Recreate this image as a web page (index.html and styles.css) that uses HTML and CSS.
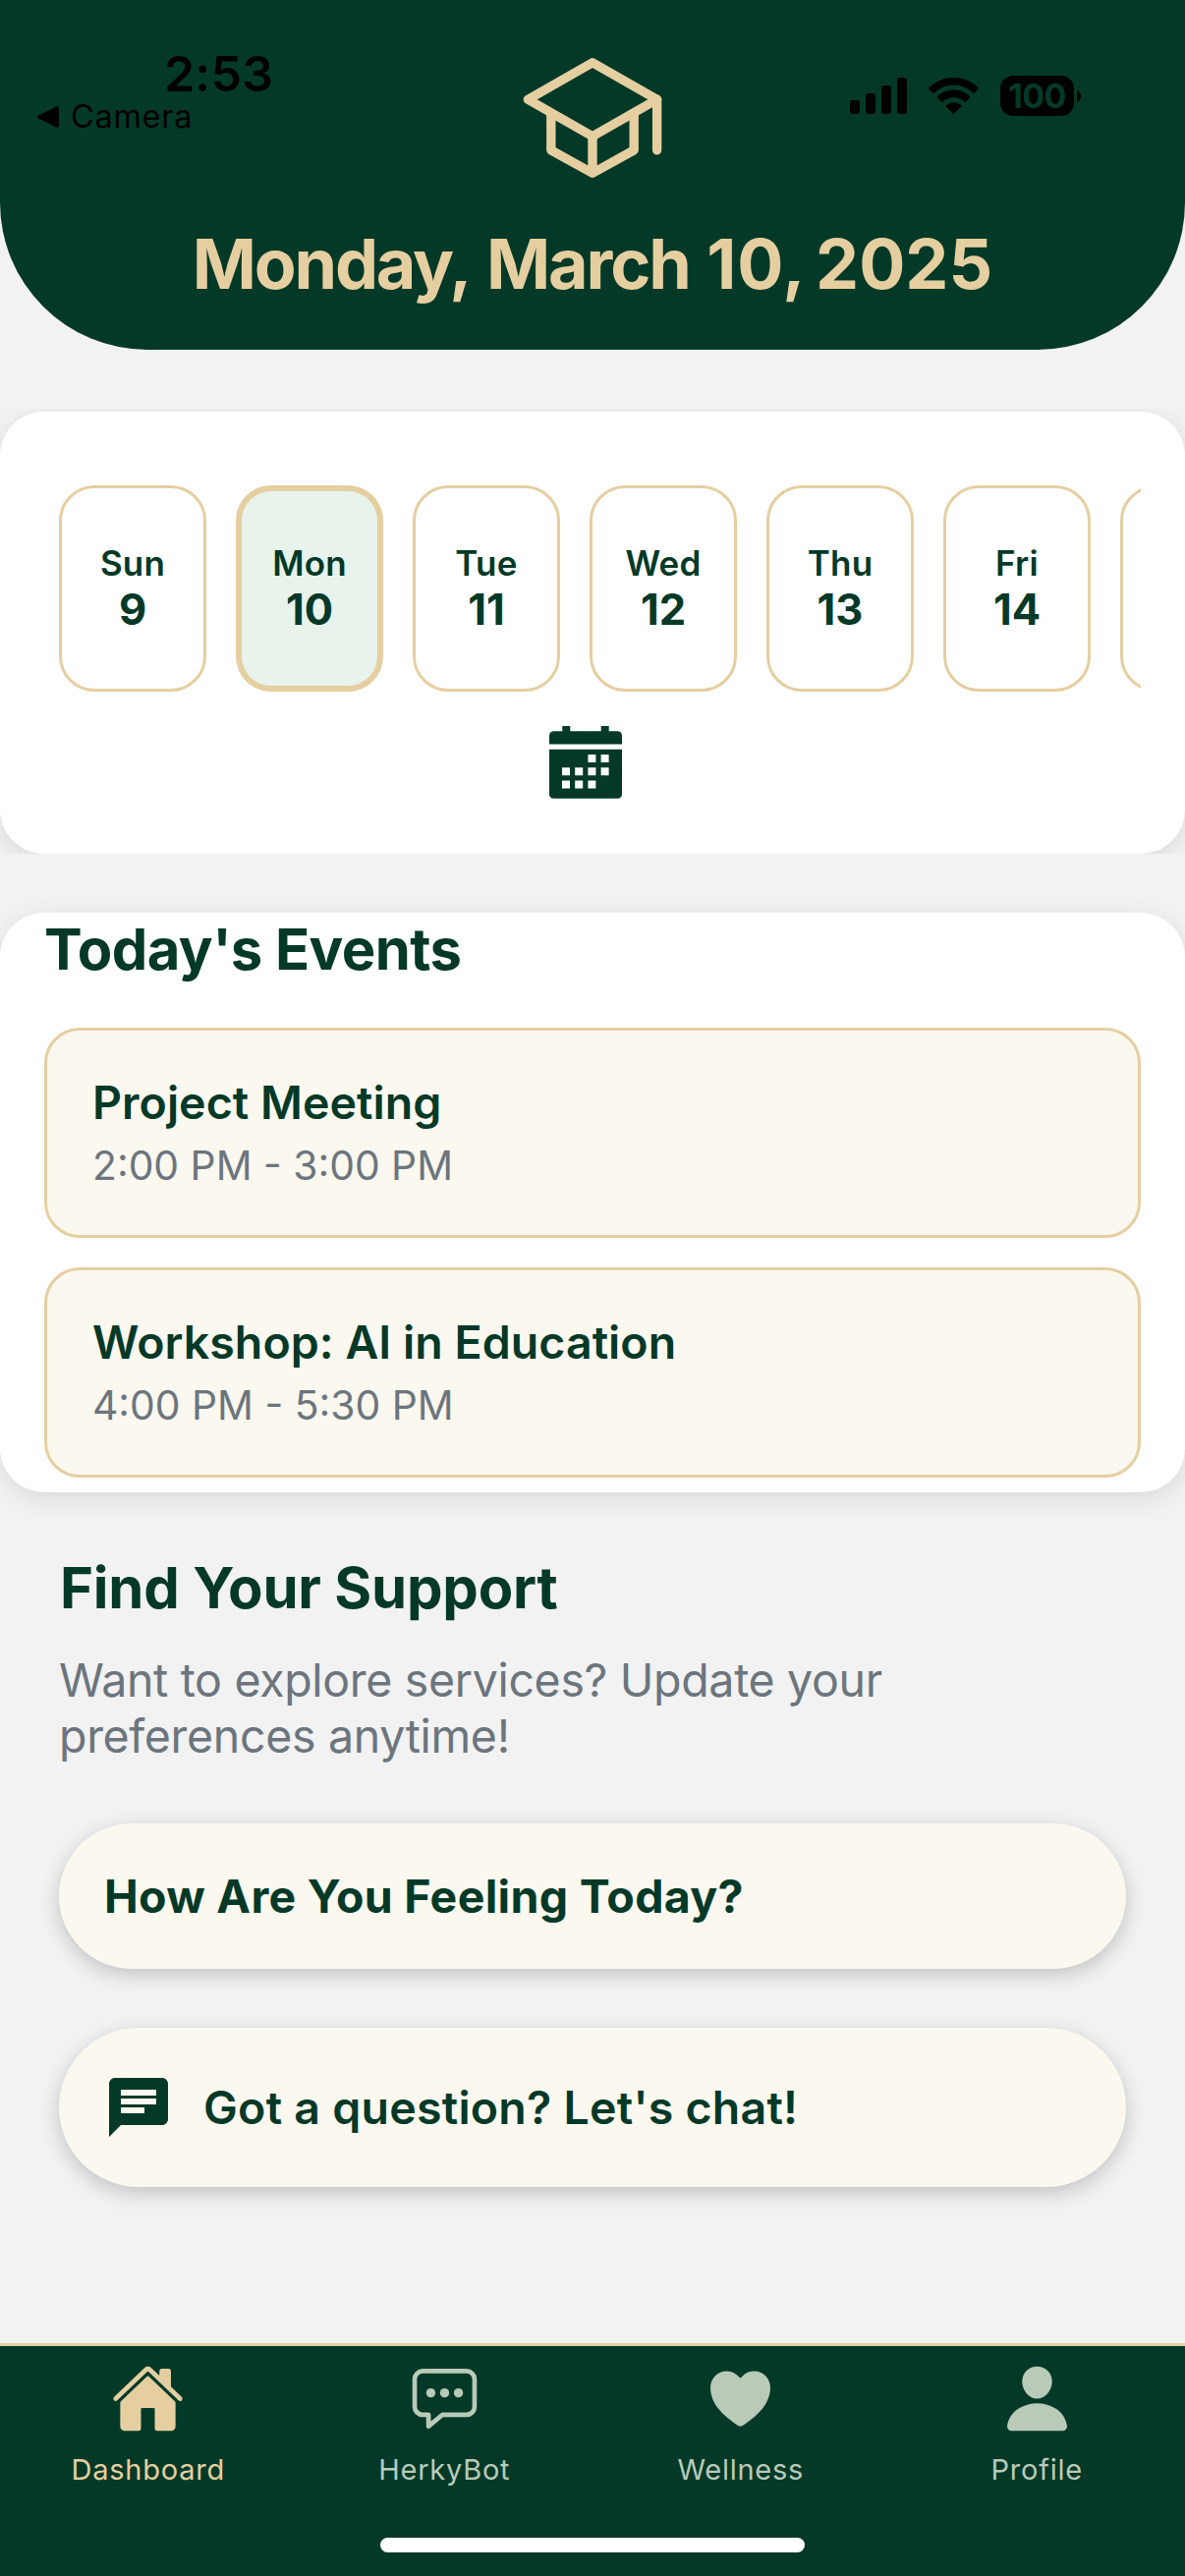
FILE: index.html
```html
<!DOCTYPE html>
<html lang="en">
<head>
<meta charset="utf-8">
<title>Dashboard</title>
<link rel="stylesheet" href="styles.css">
</head>
<body>
<div class="screen">
  <header class="header">
    <div class="status">
      <div class="status-left">
        <div class="clock">2:53</div>
        <div class="back">
          <svg class="back-arrow" viewBox="0 0 22 22"><path d="M1.2 9.4 18.6.7Q22 -.6 22 3v16q0 3.600-3.400 2.300L1.200 12.600Q-.8 11 1.200 9.400z"/></svg>
          <span class="back-label">Camera</span>
        </div>
      </div>
      <div class="status-right">
        <svg class="signal" viewBox="0 0 59 37"><rect y="23" width="10" height="14" rx="3"/><rect x="16" y="16" width="10" height="21" rx="3"/><rect x="32" y="8" width="10" height="29" rx="3"/><rect x="48" width="10" height="37" rx="3"/></svg>
        <svg class="wifi" viewBox="0 0 51 37"><path d="M25.500 0C35.500 0 44.400 3.800 50.600 10.200q.6.700 0 1.400L46.500 15.700q-.7.600-1.400 0C40 10.600 33.100 7.600 25.500 7.600S11 10.600 5.900 15.700q-.7.600-1.400 0L.4 11.600q-.6-.7 0-1.400C6.600 3.800 15.500 0 25.500 0z"/><path d="M25.500 12.600c6.400 0 12.200 2.400 16.600 6.500q.7.700 0 1.400l-4.200 4.100q-.7.600-1.400 0c-2.900-2.700-6.700-4.300-11-4.300s-8.100 1.600-11 4.300q-.7.600-1.400 0l-4.200-4.100q-.7-.7 0-1.400c4.400-4.100 10.200-6.500 16.600-6.500z"/><path d="M25.500 25.300c3 0 5.700 1 7.800 2.900q.7.700 0 1.400l-7.100 7q-.7.600-1.400 0l-7.100-7q-.7-.7 0-1.400c2.100-1.900 4.800-2.900 7.800-2.900z"/></svg>
        <div class="battery"><span class="battery-level">100</span></div>
        <svg class="battery-tip" viewBox="0 0 4 12"><path d="M0 0c2.500 1 4 3.300 4 6s-1.500 5-4 6z"/></svg>
      </div>
    </div>
    <svg class="logo" viewBox="0 0 512 512"><path d="M32 192L256 64l224 128-224 128L32 192z"/><path d="M112 240v128l144 80 144-80V240M480 368V192M256 320v128"/></svg>
    <h1 class="date"><span class="weekday">Monday,</span> <span class="month">March</span> <span class="dom">10,</span> <span class="year">2025</span></h1>
  </header>

  <section class="calendar-wrap">
    <div class="card calendar">
      <div class="days">
        <div class="day"><span class="day-name">Sun</span><span class="day-num">9</span></div>
        <div class="day selected"><span class="day-name">Mon</span><span class="day-num">10</span></div>
        <div class="day"><span class="day-name">Tue</span><span class="day-num">11</span></div>
        <div class="day"><span class="day-name">Wed</span><span class="day-num">12</span></div>
        <div class="day"><span class="day-name">Thu</span><span class="day-num">13</span></div>
        <div class="day"><span class="day-name">Fri</span><span class="day-num">14</span></div>
        <div class="day"></div>
      </div>
      <svg class="calendar-icon" viewBox="0 0 74 74"><path fill-rule="evenodd" d="M13.300 0h8v5.300h31.400V0h8v5.300H69.500a4.500 4.500 0 0 1 4.500 4.500V18.400H0V9.800a4.500 4.500 0 0 1 4.500-4.500h8.800zM0 23.700h74V69.500a4.300 4.300 0 0 1-4.300 4.300H4.300A4.300 4.300 0 0 1 0 69.500zM39.400 29h8v8h-8zM52.600 29h8v8h-8zM13 42.200h8v8h-8zM26.200 42.200h8v8h-8zM39.400 42.200h8v8h-8zM52.600 42.200h8v8h-8zM13 55.400h8v8h-8zM26.200 55.400h8v8h-8zM39.400 55.400h8v8h-8z"/></svg>
    </div>
  </section>

  <section class="card events">
    <h2 class="heading">Today's Events</h2>
    <div class="event-list">
      <article class="event">
        <h3 class="event-title">Project Meeting</h3>
        <p class="event-time">2:00 PM - 3:00 PM</p>
      </article>
      <article class="event">
        <h3 class="event-title">Workshop: AI in Education</h3>
        <p class="event-time">4:00 PM - 5:30 PM</p>
      </article>
    </div>
  </section>

  <section class="support">
    <h2 class="heading support-heading">Find Your Support</h2>
    <p class="support-text">Want to explore services? Update your<br>preferences anytime!</p>
    <div class="actions">
      <div class="action mood"><span class="action-label bold">How Are You Feeling Today?</span></div>
      <div class="action chat">
        <svg class="chat-icon" viewBox="0 0 24 24"><path d="M20 2H4c-1.100 0-1.990.9-1.990 2L2 22l4-4h14c1.100 0 2-.9 2-2V4c0-1.100-.9-2-2-2zM6 9h12v2H6V9zm8 5H6v-2h8v2zm4-6H6V6h12v2z"/></svg>
        <span class="action-label">Got a question? Let's chat!</span>
      </div>
    </div>
  </section>

  <nav class="tabs">
    <div class="tab active">
      <svg class="tab-icon" viewBox="0 0 512 512"><path d="M261.560 101.280a8 8 0 00-11.060 0L66.400 277.150a8 8 0 00-2.470 5.790L63.900 448a32 32 0 0032 32H192a16 16 0 0016-16V328a8 8 0 018-8h80a8 8 0 018 8v136a16 16 0 0016 16h96.060a32 32 0 0032-32V282.940a8 8 0 00-2.470-5.790z"/><path d="M490.910 244.150l-74.800-71.560V64a16 16 0 00-16-16h-48a16 16 0 00-16 16v32l-57.920-55.380C272.770 35.140 264.710 32 256 32c-8.680 0-16.720 3.140-22.140 8.630l-212.700 203.500c-6.220 6-7 15.870-1.340 22.370A16 16 0 0043 267.560L250.500 69.280a8 8 0 0111.060 0l207.520 198.280a16 16 0 0022.590-.44c6.140-6.360 5.630-16.860-.76-22.970z"/></svg>
      <span class="tab-label">Dashboard</span>
    </div>
    <div class="tab">
      <svg class="tab-icon" viewBox="0 0 512 512"><path class="outline" d="M408 64H104a56.160 56.160 0 00-56 56v192a56.160 56.160 0 0056 56h40v80l93.720-78.140a8 8 0 015.130-1.860H408a56.160 56.160 0 0056-56V120a56.160 56.160 0 00-56-56z"/><circle cx="160" cy="216" r="32"/><circle cx="256" cy="216" r="32"/><circle cx="352" cy="216" r="32"/></svg>
      <span class="tab-label">HerkyBot</span>
    </div>
    <div class="tab">
      <svg class="tab-icon" viewBox="0 0 512 512"><path d="M256 448a32 32 0 01-18-5.570c-78.590-53.350-112.620-89.930-131.390-112.800-40-48.750-59.150-98.800-58.610-153C48.630 114.520 98.460 64 159.080 64c44.080 0 74.610 24.830 92.390 45.510a6 6 0 009.060 0C278.310 88.810 308.840 64 352.920 64c60.620 0 110.450 50.520 111.080 112.640.54 54.210-18.630 104.260-58.610 153-18.770 22.870-52.800 59.450-131.390 112.800A32 32 0 01256 448z"/></svg>
      <span class="tab-label">Wellness</span>
    </div>
    <div class="tab">
      <svg class="tab-icon" viewBox="0 0 512 512"><path d="M332.640 64.580C313.180 43.570 286 32 256 32c-30.160 0-57.430 11.500-76.800 32.380-19.580 21.110-29.120 49.800-26.880 80.780C156.760 206.280 203.270 256 256 256s99.160-49.710 103.670-110.820c2.270-30.700-7.330-59.330-27.030-80.600zM432 480H80a31 31 0 01-24.200-11.130c-6.500-7.770-9.120-18.380-7.180-29.110C57.060 392.940 83.400 353.610 124.800 326c36.780-24.510 83.370-38 131.200-38s94.420 13.500 131.200 38c41.400 27.600 67.740 66.930 76.180 113.750 1.940 10.730-.68 21.340-7.180 29.110A31 31 0 01432 480z"/></svg>
      <span class="tab-label">Profile</span>
    </div>
    <div class="home-indicator"></div>
  </nav>
</div>
</body>
</html>
```
FILE: styles.css
```css
:root {
  --green: #043927;
  --gold: #e5cfa1;
  --cream: #fbf8ef;
  --grey: #6c757d;
  --sage: #b9cab9;
}
* { box-sizing: border-box; margin: 0; padding: 0; }
body {
  background: #f2f2f2;
  color: var(--green);
  font-family: Inter, "Liberation Sans", sans-serif;
}
svg { display: block; flex: none; }
.screen {
  width: 1206px;
  height: 2622px;
  display: flex;
  flex-direction: column;
  overflow: hidden;
}

/* Header */
.header {
  position: relative;
  height: 356px;
  flex: none;
  padding-top: 45px;
  background: var(--green);
  border-radius: 0 0 150px 150px;
  display: flex;
  flex-direction: column;
  align-items: center;
}
.logo {
  width: 150px;
  height: 150px;
  fill: none;
  stroke: var(--gold);
  stroke-width: 32;
  stroke-linecap: round;
  stroke-linejoin: round;
}
.date {
  margin-top: 32px;
  color: var(--gold);
  font-size: 70px;
  line-height: 84px;
  font-weight: 700;
  letter-spacing: -1.2px;
  white-space: nowrap;
}
.date .weekday { letter-spacing: -2.200px; margin-right: 1px; }
.date .month { letter-spacing: -2.100px; margin-right: 2px; }
.date .dom { letter-spacing: .9px; }
.date .year { letter-spacing: 0; margin-left: -6px; }

/* System status bar, laid over the header */
.status {
  position: absolute;
  inset: 0 0 auto 0;
  display: flex;
  justify-content: space-between;
  color: #000;
  fill: #000;
}
.status-left { padding: 49px 0 0 38px; }
.clock {
  padding-left: 129px;
  font-size: 50px;
  line-height: 53px;
  font-weight: 600;
  letter-spacing: .2px;
}
.back { display: flex; align-items: center; gap: 12px; margin-top: 1px; }
.back-arrow { width: 22px; height: 22px; }
.back-label { font-size: 32.500px; line-height: 32px; letter-spacing: .7px; }
.status-right {
  display: flex;
  align-items: center;
  height: 41px;
  margin-top: 77px;
  padding-right: 106px;
}
.signal { width: 59px; height: 37px; margin-right: 21px; }
.wifi { width: 51px; height: 37px; margin-right: 22px; }
.battery {
  width: 75px;
  height: 41px;
  border-radius: 13px;
  background: #000;
  color: var(--green);
  display: flex;
  align-items: center;
  justify-content: center;
}
.battery-level { font-size: 34px; line-height: 41px; font-weight: 700; letter-spacing: -.7px; }
.battery-tip { width: 4px; height: 12px; margin-left: 3px; }

/* Cards */
.card {
  background: #fff;
  border-radius: 45px;
  box-shadow: 0 6px 24px rgba(0, 0, 0, .1);
}
.calendar-wrap {
  flex: none;
  margin-top: 60px;
  padding-top: 3px;
  overflow: hidden;
}
.calendar {
  height: 450px;
  padding: 75px 45px 0;
  display: flex;
  flex-direction: column;
  align-items: center;
}
.days {
  width: 100%;
  padding-left: 15px;
  display: flex;
  gap: 30px;
  overflow: hidden;
}
.day {
  flex: none;
  width: 150px;
  height: 210px;
  border: 3px solid var(--gold);
  border-radius: 36px;
  display: flex;
  flex-direction: column;
  align-items: center;
  justify-content: center;
}
.day.selected { border-width: 6px; background: #e8f3ec; }
.day-name { font-size: 35px; line-height: 42px; font-weight: 600; letter-spacing: .2px; }
.day-num { font-size: 43.500px; line-height: 53px; font-weight: 700; }
.calendar-icon { width: 74px; height: 74px; margin: 35px 14px 0 0; fill: var(--green); }

/* Events */
.events { flex: none; height: 590px; margin-top: 60px; padding: 1px 45px 0; }
.heading { font-size: 58px; line-height: 72px; font-weight: 700; letter-spacing: -.55px; }
.event-list { margin-top: 44px; display: flex; flex-direction: column; gap: 30px; }
.event {
  height: 214px;
  padding: 45px 46px;
  border: 3px solid var(--gold);
  border-radius: 36px;
  background: var(--cream);
}
.event-title { font-size: 46.500px; line-height: 57px; font-weight: 600; letter-spacing: .05px; }
.event-time { margin-top: 9px; font-size: 40.800px; line-height: 52px; color: var(--grey); }

/* Support */
.support { padding: 61px 60px 0; }
.support-heading { padding-left: 1px; letter-spacing: -.2px; }
.support-text {
  margin-top: 30px;
  font-size: 46.500px;
  line-height: 57px;
  letter-spacing: -.33px;
  color: var(--grey);
  white-space: nowrap;
}
.actions { margin-top: 60px; display: flex; flex-direction: column; gap: 60px; }
.action {
  display: flex;
  align-items: center;
  gap: 30px;
  padding: 0 45px;
  border-radius: 90px;
  background: var(--cream);
  box-shadow: 0 6px 20px rgba(0, 0, 0, .2);
}
.mood { height: 148px; padding-left: 46px; }
.chat { height: 162px; }
.chat-icon { width: 72px; height: 72px; fill: var(--green); }
.action-label {
  font-size: 46.500px;
  line-height: 57px;
  font-weight: 600;
  letter-spacing: .25px;
  white-space: nowrap;
}
.action-label.bold { font-weight: 700; letter-spacing: .3px; }

/* Tab bar */
.tabs {
  height: 237px;
  margin-top: auto;
  flex: none;
  border-top: 3px solid var(--gold);
  background: var(--green);
  display: grid;
  grid-template-columns: repeat(4, 1fr);
  grid-template-rows: 195px 15px;
  justify-items: center;
}
.tab {
  padding-top: 16px;
  display: flex;
  flex-direction: column;
  align-items: center;
  color: var(--sage);
}
.tab.active { color: var(--gold); }
.tab-icon { width: 75px; height: 75px; fill: currentColor; }
.outline { fill: none; stroke: currentColor; stroke-width: 32; stroke-linejoin: round; }
.tab-label { margin-top: 17px; font-size: 29px; line-height: 36px; letter-spacing: .75px; }
.home-indicator {
  grid-column: 1 / -1;
  width: 432px;
  height: 15px;
  border-radius: 8px;
  background: #fff;
}
```
